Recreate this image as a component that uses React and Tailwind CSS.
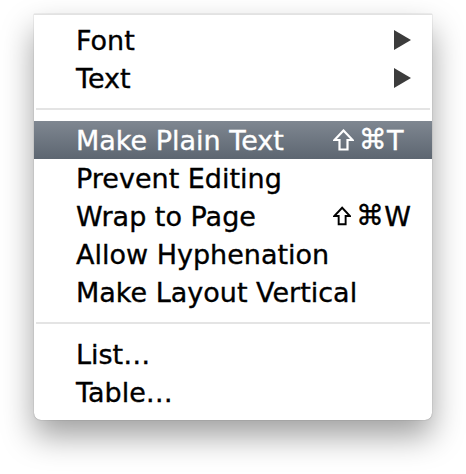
import React from "react";

const font = { fontFamily: '"DejaVu Sans", "Liberation Sans", sans-serif' };

function Arrow() {
  return (
    <svg width="17" height="20" viewBox="0 0 17 20" className="block">
      <polygon points="0,0 17,10 0,20" fill="#3c3c3c" />
    </svg>
  );
}

function ShiftIcon({ color }) {
  return (
    <svg width="21" height="22" viewBox="0 0 21 22" className="block">
      <path
        d="M10.5 1.5 L19.5 11 L14.5 11 L14.5 20.5 L6.5 20.5 L6.5 11 L1.5 11 Z"
        fill="none"
        stroke={color}
        strokeWidth="2.2"
        strokeLinejoin="miter"
      />
    </svg>
  );
}

const txt = "text-[27px] leading-none [-webkit-text-stroke:0.35px_currentColor]";

function Row({ label, shortcut, arrow, active }) {
  return (
    <div
      className={
        "flex h-[38px] items-center pl-[42px] pr-[21px] " +
        (active ? "bg-gradient-to-b from-[#7f8791] to-[#5d6671] text-white" : "text-black")
      }
    >
      <span className={"flex-1 " + txt}>{label}</span>
      {shortcut && (
        <span className="flex w-[78px] items-center justify-start">
          <ShiftIcon color={active ? "#ffffff" : "#000000"} />
          <span className={"ml-[5px] text-[28px] leading-none [-webkit-text-stroke:0.35px_currentColor]"}>⌘</span>
          <span className={txt}>{shortcut}</span>
        </span>
      )}
      {arrow && <Arrow />}
    </div>
  );
}

function Sep() {
  return (
    <div className="flex h-[24px] items-center px-[2px]">
      <div className="h-[2px] w-full bg-[#e4e4e4]" />
    </div>
  );
}

export default function App() {
  return (
    <div className="w-[466px] h-[474px] bg-white pl-[34px] pt-[14px]" style={font}>
      <div className="w-[398px] bg-white rounded-b-[7px] border-t border-[#e2e2e2] shadow-[0_16px_32px_rgba(0,0,0,0.38),0_0_1px_rgba(0,0,0,0.5)] pt-[6px] pb-[9px]">
        <Row label="Font" arrow />
        <Row label="Text" arrow />
        <Sep />
        <Row label="Make Plain Text" shortcut="T" active />
        <Row label="Prevent Editing" />
        <Row label="Wrap to Page" shortcut="W" />
        <Row label="Allow Hyphenation" />
        <Row label="Make Layout Vertical" />
        <Sep />
        <Row label="List…" />
        <Row label="Table…" />
      </div>
    </div>
  );
}
